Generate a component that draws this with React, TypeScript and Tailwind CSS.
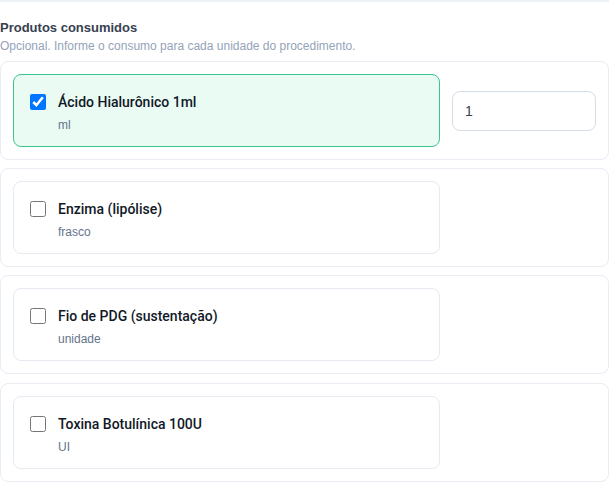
const products = [
  { name: "Ácido Hialurônico 1ml", unit: "ml", checked: true, qty: "1" },
  { name: "Enzima (lipólise)", unit: "frasco", checked: false, qty: "" },
  { name: "Fio de PDG (sustentação)", unit: "unidade", checked: false, qty: "" },
  { name: "Toxina Botulínica 100U", unit: "UI", checked: false, qty: "" },
];

export default function App() {
  return (
    <div className="min-h-screen bg-white font-['Liberation_Sans',Arial,sans-serif]">
      <div className="h-[2px] bg-[#eef2f6]" />
      <div className="pt-[16px]">
        <h3 className="text-[13px] font-semibold leading-5 text-[#374151]">Produtos consumidos</h3>
        <p className="text-xs leading-4 text-[#94a3b8]">Opcional. Informe o consumo para cada unidade do procedimento.</p>
        <div className="mt-[7px] flex flex-col gap-[8.2px]">
          {products.map((p) => (
            <div key={p.name} className="flex items-center gap-3 rounded-lg border border-[#e8edf3] p-3">
              <label
                className={
                  p.checked
                    ? "flex flex-1 items-start gap-3 rounded-lg border border-[#3cc48e] bg-[#eafbf3] px-4 pt-[17px] pb-[13px]"
                    : "flex flex-1 items-start gap-3 rounded-lg border border-[#e6ebf1] bg-white px-4 pt-[17px] pb-[13px]"
                }
              >
                <input type="checkbox" defaultChecked={p.checked} className="m-0 mt-[2px] h-4 w-4 shrink-0" />
                <div className="flex flex-col">
                  <span className="font-['Roboto',sans-serif] text-sm font-medium leading-5 text-[#111827]">{p.name}</span>
                  <span className="mt-[5px] text-xs leading-4 text-[#64748b]">{p.unit}</span>
                </div>
              </label>
              <div className="w-36 shrink-0">
                {p.checked ? (
                  <input
                    type="text"
                    defaultValue={p.qty}
                    className="h-10 w-full rounded-lg border border-[#d5dde6] bg-white px-3 text-sm text-[#374151] outline-none"
                  />
                ) : null}
              </div>
            </div>
          ))}
        </div>
      </div>
    </div>
  );
}
